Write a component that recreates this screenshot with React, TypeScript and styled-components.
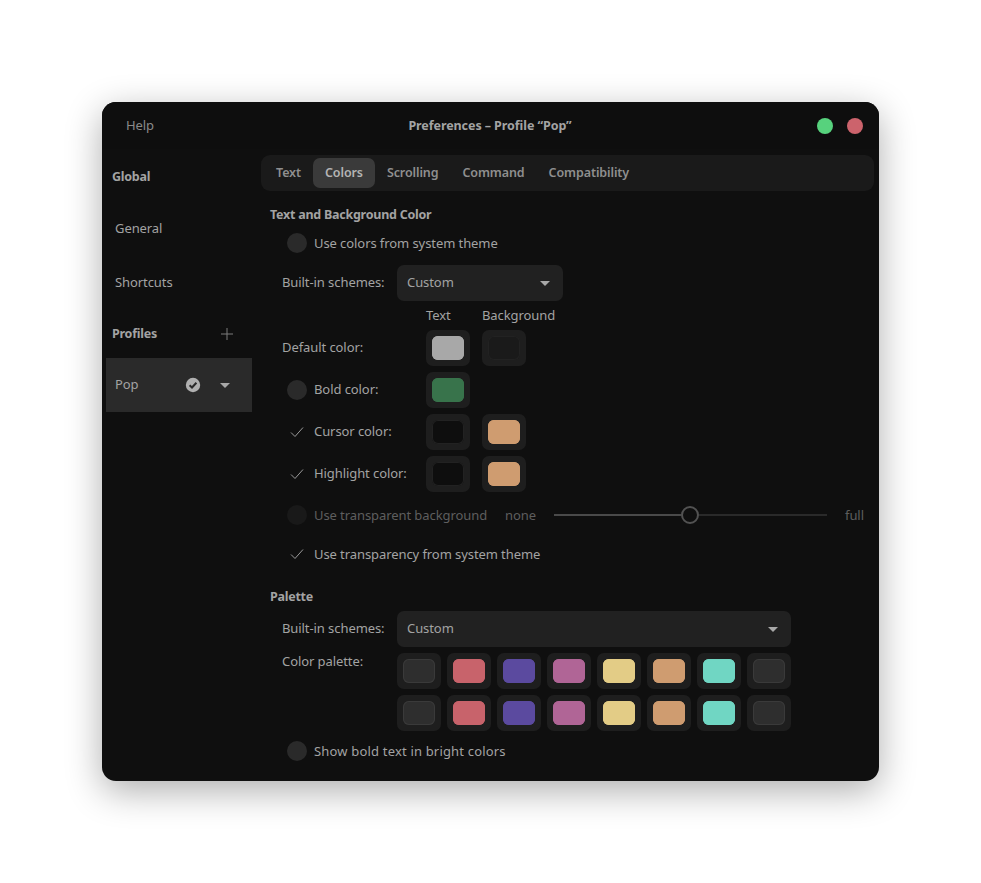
import styled, { createGlobalStyle } from 'styled-components';

const GlobalStyle = createGlobalStyle`
  html, body {
    margin: 0;
    padding: 0;
    background: #fff;
  }
  * {
    box-sizing: border-box;
  }
`;

const Page = styled.div`
  display: flex;
  justify-content: center;
  align-items: center;
  min-height: 100vh;
  font-family: 'Noto Sans', 'Open Sans', sans-serif;
  font-size: 13px;
  letter-spacing: -0.08px;
  color: #a3a3a3;
`;

const Window = styled.div`
  width: 777px;
  height: 679px;
  background: #0f0f0f;
  border-radius: 14px;
  box-shadow: 0 10px 36px rgba(0, 0, 0, 0.32);
  overflow: hidden;
  display: flex;
  flex-direction: column;
`;

const TitleBar = styled.div`
  height: 47px;
  flex: none;
  display: flex;
  align-items: center;
  padding: 0 16px 0 24px;
  background: #0e0e0e;
`;

const HelpButton = styled.div`
  width: 100px;
  padding-bottom: 2px;
  color: #8a8a8a;
`;

const Title = styled.div`
  flex: 1;
  text-align: center;
  font-weight: 700;
  font-size: 12.5px;
  letter-spacing: -0.07px;
  padding-right: 49px;
`;

const Dot = styled.div<{ $color: string }>`
  width: 16px;
  height: 16px;
  border-radius: 50%;
  background: ${(p) => p.$color};
  margin-left: 14px;
`;

const Body = styled.div`
  flex: 1;
  display: flex;
`;

const Sidebar = styled.div`
  width: 150px;
  flex: none;
  padding: 3px 0 0 4px;
`;

const SideHeading = styled.div`
  height: 49px;
  display: flex;
  align-items: center;
  justify-content: space-between;
  padding: 0 19px 0 6px;
  font-weight: 700;
  font-size: 12.5px;
  letter-spacing: -0.25px;
`;

const SideItem = styled.div`
  height: 54px;
  display: flex;
  align-items: center;
  padding-left: 9px;
`;

const ProfileRow = styled(SideItem)`
  background: #2a2a2a;
  padding-right: 22px;
`;

const ProfileName = styled.div`
  flex: 1;
  padding-bottom: 2px;
`;

const ProfileIcons = styled.div`
  display: flex;
  align-items: center;
  gap: 19px;
`;

const Main = styled.div`
  flex: 1;
  padding: 6px 5px 0 9px;
  min-width: 0;
`;

const Tabs = styled.div`
  height: 36px;
  background: #1a1a1a;
  border-radius: 9px;
  display: flex;
  align-items: center;
  padding: 0 3px;
`;

const Tab = styled.div<{ $active?: boolean }>`
  height: 30px;
  display: flex;
  align-items: center;
  padding: 0 12px 1px;
  border-radius: 7px;
  background: ${(p) => (p.$active ? '#3a3a3a' : 'transparent')};
  color: ${(p) => (p.$active ? '#b4b4b4' : '#8f8f8f')};
  font-weight: 600;
  letter-spacing: -0.1px;
  font-size: 12.5px;
`;

const Content = styled.div`
  padding: 15px 0 0 9px;
`;

const SectionTitle = styled.div<{ $top?: number }>`
  height: 18px;
  line-height: 18px;
  font-weight: 700;
  font-size: 12.5px;
  letter-spacing: -0.25px;
  margin-top: ${(p) => p.$top ?? 0}px;
`;

const CheckRow = styled.div<{ $disabled?: boolean; $height?: number; $top?: number; $spacing?: number }>`
  display: flex;
  align-items: center;
  height: ${(p) => p.$height ?? 38}px;
  margin-top: ${(p) => p.$top ?? 0}px;
  padding-left: 17px;
  color: ${(p) => (p.$disabled ? '#5e5e5e' : 'inherit')};
  ${(p) => (p.$spacing !== undefined ? `letter-spacing: ${p.$spacing}px;` : '')}
`;

const CircleBox = styled.div<{ $dim?: boolean }>`
  width: 20px;
  height: 20px;
  border-radius: 50%;
  flex: none;
  margin-right: 7px;
  background: ${(p) => (p.$dim ? '#191919' : '#2a2a2a')};
`;

const TickBox = styled.div`
  width: 20px;
  height: 20px;
  flex: none;
  margin-right: 7px;
  display: flex;
  align-items: center;
  justify-content: center;
`;

const FieldRow = styled.div<{ $top?: number; $align?: string }>`
  display: flex;
  align-items: ${(p) => p.$align || 'center'};
  padding-left: 12px;
  margin-top: ${(p) => p.$top ?? 0}px;
`;

const FieldLabel = styled.div`
  width: 115px;
  flex: none;
  line-height: 16px;
  padding-bottom: 2px;
`;

const LabelText = styled.span`
  display: block;
  padding-bottom: 2px;
`;

const Select = styled.div<{ $width: number }>`
  width: ${(p) => p.$width}px;
  height: 36px;
  background: #212121;
  border-radius: 7px;
  display: flex;
  align-items: center;
  justify-content: space-between;
  padding: 0 13px 0 10px;
`;

const ColorGrid = styled.div`
  display: grid;
  grid-template-columns: 132px 44px 44px;
  column-gap: 12px;
  row-gap: 6px;
  padding-left: 12px;
  align-items: center;
  grid-auto-rows: 36px;
`;

const ColorHead = styled.div`
  display: grid;
  grid-template-columns: 132px 44px auto;
  column-gap: 12px;
  padding-left: 12px;
  height: 18px;
  line-height: 18px;
  margin-top: 5px;
  margin-bottom: 6px;
`;

const GridLabel = styled.div`
  display: flex;
  align-items: center;
`;

const GridIndent = styled(GridLabel)`
  padding-left: 5px;
`;

const Swatch = styled.div<{ $color: string; $edge?: string }>`
  width: 44px;
  height: 36px;
  background: #1e1e1e;
  border-radius: 7px;
  padding: 6px;
  &::before {
    content: '';
    display: block;
    width: 32px;
    height: 24px;
    border-radius: 6px;
    background: ${(p) => p.$color};
    box-shadow: inset 0 0 0 1px ${(p) => p.$edge || p.$color};
  }
`;

const SliderText = styled.div<{ $left?: number }>`
  flex: none;
  margin-left: ${(p) => p.$left ?? 0}px;
`;

const Slider = styled.div`
  width: 273px;
  margin: 0 18px;
  display: flex;
  align-items: center;
  flex: none;
`;

const Track = styled.div<{ $fill?: boolean }>`
  flex: ${(p) => (p.$fill ? 127 : 128)};
  height: 2px;
  background: ${(p) => (p.$fill ? '#4a4a4a' : '#2a2a2a')};
`;

const Thumb = styled.div`
  width: 18px;
  height: 18px;
  flex: none;
  border-radius: 50%;
  border: 2px solid #525252;
  background: #0f0f0f;
`;

const Palette = styled.div`
  display: grid;
  grid-template-columns: repeat(8, 44px);
  gap: 6px;
`;

const Arrow = () => (
  <svg width="10" height="5" viewBox="0 0 10 5">
    <path d="M0 0h10L5 5z" fill="#a8a8a8" />
  </svg>
);

const Tick = () => (
  <svg width="14" height="12" viewBox="0 0 14 12" fill="none">
    <path d="M1 6.5 5 10.5 13 1.5" stroke="#9a9a9a" strokeWidth="1" />
  </svg>
);

const Plus = () => (
  <svg width="12" height="12" viewBox="0 0 12 12">
    <path d="M6 0v12M0 6h12" stroke="#7d7d7d" strokeWidth="1" />
  </svg>
);

const CheckBadge = () => (
  <svg width="16" height="16" viewBox="0 0 16 16">
    <circle cx="8" cy="8" r="7.2" fill="#b0b0b0" />
    <path d="M4.6 8.2 7 10.5 11.4 5.8" fill="none" stroke="#2a2a2a" strokeWidth="2" />
  </svg>
);

const paletteColors = [
  { color: '#2e2e2e', edge: '#3a3a3a' },
  { color: '#c8636b' },
  { color: '#5b4a9f' },
  { color: '#b06596' },
  { color: '#e3cc86' },
  { color: '#cf9c70' },
  { color: '#70d6c3' },
  { color: '#2e2e2e', edge: '#3a3a3a' },
];

export default function App() {
  return (
    <Page>
      <GlobalStyle />
      <Window>
        <TitleBar>
          <HelpButton>Help</HelpButton>
          <Title>Preferences – Profile “Pop”</Title>
          <Dot $color="#57d27d" />
          <Dot $color="#cc636c" />
        </TitleBar>
        <Body>
          <Sidebar>
            <SideHeading>Global</SideHeading>
            <SideItem>General</SideItem>
            <SideItem>Shortcuts</SideItem>
            <SideHeading>
              Profiles
              <Plus />
            </SideHeading>
            <ProfileRow>
              <ProfileName>Pop</ProfileName>
              <ProfileIcons>
                <CheckBadge />
                <Arrow />
              </ProfileIcons>
            </ProfileRow>
          </Sidebar>
          <Main>
            <Tabs>
              <Tab>Text</Tab>
              <Tab $active>Colors</Tab>
              <Tab>Scrolling</Tab>
              <Tab>Command</Tab>
              <Tab>Compatibility</Tab>
            </Tabs>
            <Content>
              <SectionTitle>Text and Background Color</SectionTitle>
              <CheckRow>
                <CircleBox />
                Use colors from system theme
              </CheckRow>
              <FieldRow $top={3}>
                <FieldLabel>Built-in schemes:</FieldLabel>
                <Select $width={166}>
                  <LabelText>Custom</LabelText>
                  <Arrow />
                </Select>
              </FieldRow>
              <ColorHead>
                <span />
                <span>Text</span>
                <span>Background</span>
              </ColorHead>
              <ColorGrid>
                <GridLabel>
                  <LabelText>Default color:</LabelText>
                </GridLabel>
                <Swatch $color="#a8a8a8" />
                <Swatch $color="#1a1a1a" $edge="#222" />
                <GridIndent>
                  <CircleBox />
                  <LabelText>Bold color:</LabelText>
                </GridIndent>
                <Swatch $color="#38734b" />
                <span />
                <GridIndent>
                  <TickBox>
                    <Tick />
                  </TickBox>
                  <LabelText>Cursor color:</LabelText>
                </GridIndent>
                <Swatch $color="#0e0e0e" $edge="#222" />
                <Swatch $color="#cf9c70" />
                <GridIndent>
                  <TickBox>
                    <Tick />
                  </TickBox>
                  <LabelText>Highlight color:</LabelText>
                </GridIndent>
                <Swatch $color="#0e0e0e" $edge="#222" />
                <Swatch $color="#cf9c70" />
              </ColorGrid>
              <CheckRow $disabled $height={42} $top={2}>
                <CircleBox $dim />
                Use transparent background
                <SliderText $left={18}>none</SliderText>
                <Slider>
                  <Track $fill />
                  <Thumb />
                  <Track />
                </Slider>
                <SliderText>full</SliderText>
              </CheckRow>
              <CheckRow $height={36}>
                <TickBox>
                  <Tick />
                </TickBox>
                Use transparency from system theme
              </CheckRow>
              <SectionTitle $top={16}>Palette</SectionTitle>
              <FieldRow $top={5}>
                <FieldLabel>Built-in schemes:</FieldLabel>
                <Select $width={394}>
                  <LabelText>Custom</LabelText>
                  <Arrow />
                </Select>
              </FieldRow>
              <FieldRow $top={6} $align="flex-start">
                <FieldLabel>Color palette:</FieldLabel>
                <Palette>
                  {[0, 1].flatMap((row) =>
                    paletteColors.map((c, i) => (
                      <Swatch key={`${row}-${i}`} $color={c.color} $edge={c.edge} />
                    )),
                  )}
                </Palette>
              </FieldRow>
              <CheckRow $height={40} $spacing={0.18}>
                <CircleBox />
                Show bold text in bright colors
              </CheckRow>
            </Content>
          </Main>
        </Body>
      </Window>
    </Page>
  );
}
